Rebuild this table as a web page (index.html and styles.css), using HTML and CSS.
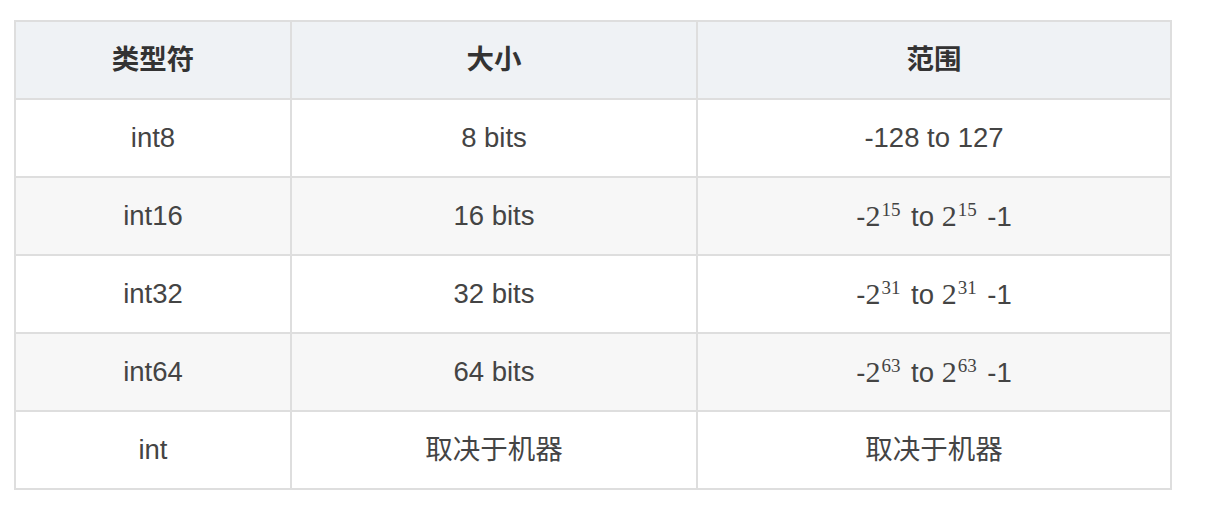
FILE: index.html
```html
<!DOCTYPE html>
<html lang="zh">
<head>
<meta charset="utf-8">
<link rel="stylesheet" href="styles.css">
</head>
<body>
<table class="types">
  <colgroup>
    <col class="c1"><col class="c2"><col class="c3">
  </colgroup>
  <thead>
    <tr><th>类型符</th><th>大小</th><th>范围</th></tr>
  </thead>
  <tbody>
    <tr><td>int8</td><td>8 bits</td><td>-128 to 127</td></tr>
    <tr><td>int16</td><td>16 bits</td><td>-<span class="m">2<sup>15</sup></span> to <span class="m">2<sup>15</sup></span> -1</td></tr>
    <tr><td>int32</td><td>32 bits</td><td>-<span class="m">2<sup>31</sup></span> to <span class="m">2<sup>31</sup></span> -1</td></tr>
    <tr><td>int64</td><td>64 bits</td><td>-<span class="m">2<sup>63</sup></span> to <span class="m">2<sup>63</sup></span> -1</td></tr>
    <tr><td>int</td><td>取决于机器</td><td>取决于机器</td></tr>
  </tbody>
</table>
</body>
</html>
```
FILE: styles.css
```css
html, body {
  margin: 0;
  padding: 0;
  background: #fff;
}
body {
  padding: 20px 0 0 14px;
  font-family: "Liberation Sans", "Noto Sans CJK SC", sans-serif;
  font-size: 27.5px;
  color: #333;
}
.types {
  border-collapse: collapse;
  width: 1156px;
  table-layout: fixed;
}
.c1 { width: 276px; }
.c2 { width: 406px; }
.c3 { width: 474px; }
.types th, .types td {
  border: 2px solid #dedede;
  height: 76px;
  padding: 0;
  text-align: center;
  vertical-align: middle;
  line-height: 30px;
}
.types th {
  background: #eff2f5;
  font-weight: bold;
  color: #333;
}
.types td {
  color: #444;
}
.types tbody tr:nth-child(even) td {
  background: #f7f7f7;
}
.m {
  font-family: "Liberation Serif", serif;
  font-size: 30px;
}
.m sup {
  font-size: 19px;
  line-height: 0;
  vertical-align: 0;
  position: relative;
  top: -10px;
  margin-left: 1px;
  margin-right: 3px;
}
```
